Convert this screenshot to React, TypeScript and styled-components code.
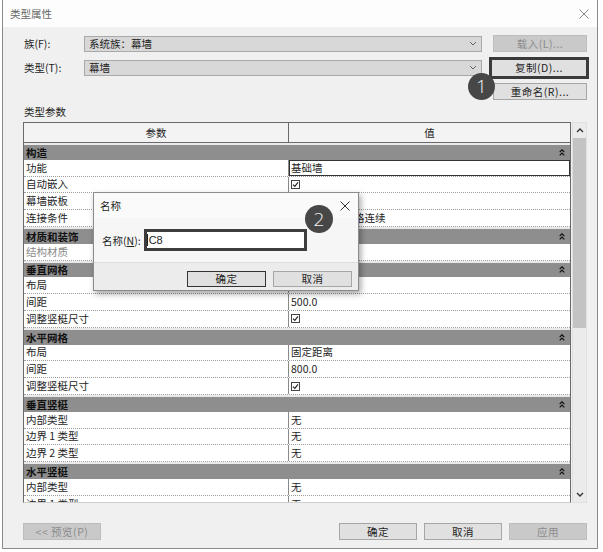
import React from 'react';
import styled, { createGlobalStyle } from 'styled-components';

const FONT = `"Noto Sans CJK SC", "Noto Sans", sans-serif`;
const BODY = '#f0f0f0';
const INK = '#1e1e1e';
const SECTION = '#8e8e8e';
const ROW_H = '16.8px';

const GlobalStyle = createGlobalStyle`
  html, body { margin: 0; padding: 0; background: #fff; }
  body { font-family: ${FONT}; font-size: 10.5px; color: ${INK}; }
`;

const Window = styled.div`
  position: relative;
  box-sizing: border-box;
  margin-left: 2px;
  width: 596px;
  height: 549px;
  border: 1px solid #8a8a8a;
  border-top: none;
  display: flex;
  flex-direction: column;
  background: ${BODY};
`;

const TitleBar = styled.div`
  height: 27px;
  flex-shrink: 0;
  background: #fdfdfd;
  display: flex;
  align-items: center;
  justify-content: space-between;
  padding: 0 8px 0 7px;
  color: #666;
  line-height: 14px;
`;

const Body = styled.div`
  flex: 1;
  display: flex;
  flex-direction: column;
  padding: 8px 10px 0 20px;
`;

const TopGrid = styled.div`
  display: grid;
  grid-template-columns: 61px 398px 1fr;
  grid-auto-rows: 17px;
  row-gap: 7px;
  align-items: center;
`;

const FieldLabel = styled.div`
  padding-left: 1px;
  line-height: 14px;
`;

const Combo = styled.div`
  box-sizing: border-box;
  height: 16px;
  background: #d8d8d8;
  border: 1px solid #a9a9a9;
  display: flex;
  align-items: center;
  justify-content: space-between;
  padding: 0 4px 0 4px;
  line-height: 14px;
`;

const Button = styled.button<{ $disabled?: boolean; $marked?: boolean }>`
  box-sizing: border-box;
  width: ${p => (p.$marked ? '96px' : '94px')};
  height: ${p => (p.$marked ? '18px' : '17px')};
  justify-self: end;
  margin: 0;
  padding: 0;
  font-family: ${FONT};
  font-size: 10.5px;
  line-height: 14px;
  letter-spacing: 0.5px;
  background: ${p => (p.$disabled ? '#c9c9c9' : '#e0e0e0')};
  color: ${p => (p.$disabled ? '#8c8c8c' : INK)};
  border: 1px solid ${p => (p.$disabled ? '#bdbdbd' : '#a6a6a6')};
  outline: ${p => (p.$marked ? '3px solid #3a3a3a' : 'none')};
  outline-offset: -1px;
`;

const ParamsLabel = styled.div`
  height: 22px;
  box-sizing: border-box;
  padding: 5px 0 0 1px;
  line-height: 14px;
`;

const TableArea = styled.div`
  height: 381px;
  display: flex;
  gap: 1px;
`;

const Table = styled.div`
  box-sizing: border-box;
  width: 548px;
  height: 100%;
  border: 1px solid #6a6a6a;
  border-bottom-color: #cfcfcf;
  background: #fff;
  overflow: hidden;
`;

const HeaderRow = styled.div`
  display: grid;
  grid-template-columns: 265px 1fr;
  height: 19px;
  background: #f3f3f3;
  border-bottom: 1px solid #6a6a6a;
`;

const HeaderCell = styled.div<{ $first?: boolean }>`
  display: flex;
  align-items: center;
  justify-content: center;
  line-height: 14px;
  border-right: ${p => (p.$first ? '1px solid #6a6a6a' : 'none')};
`;

const SectionRow = styled.div`
  box-sizing: border-box;
  height: ${ROW_H};
  background: ${SECTION};
  border-top: 2px solid #eaeaea;
  display: flex;
  align-items: center;
  justify-content: space-between;
  padding: 0 5px 0 2px;
  font-weight: 700;
  color: #111;
  line-height: 13px;
`;

const Row = styled.div`
  box-sizing: border-box;
  height: ${ROW_H};
  display: grid;
  grid-template-columns: 265px 1fr;
  border-bottom: 1px dotted #9c9c9c;
`;

const ParamCell = styled.div<{ $muted?: boolean }>`
  display: flex;
  align-items: center;
  padding-left: 2px;
  border-right: 1px solid #8a8a8a;
  color: ${p => (p.$muted ? '#8a8a8a' : INK)};
  line-height: 14px;
  white-space: nowrap;
`;

const ValueCell = styled.div<{ $editing?: boolean }>`
  display: flex;
  align-items: center;
  padding-left: 2px;
  line-height: 14px;
  white-space: nowrap;
  box-shadow: ${p => (p.$editing ? 'inset 0 0 0 1px #333' : 'none')};
`;

const CheckBox = styled.span`
  box-sizing: border-box;
  width: 9px;
  height: 9px;
  border: 1px solid #444;
  display: inline-flex;
  align-items: center;
  justify-content: center;
  background: #fff;
`;

const ScrollBar = styled.div`
  width: 15px;
  display: flex;
  flex-direction: column;
  background: #ebebeb;
  border: 1px solid #e0e0e0;
  box-sizing: border-box;
`;

const ScrollArrow = styled.div`
  height: 15px;
  display: flex;
  align-items: center;
  justify-content: center;
  flex-shrink: 0;
`;

const ScrollThumb = styled.div`
  height: 190px;
  background: #c3c3c3;
  flex-shrink: 0;
`;

const ScrollTrack = styled.div`
  flex: 1;
`;

const Footer = styled.div`
  margin-top: 20px;
  display: flex;
  align-items: center;
  gap: 7px;
`;

const FooterButton = styled(Button)`
  width: 78px;
  &:first-child { margin-right: auto; }
`;

const Badge = styled.div<{ $x: number; $y: number; $d: number }>`
  position: absolute;
  left: ${p => p.$x}px;
  top: ${p => p.$y}px;
  width: ${p => p.$d}px;
  height: ${p => p.$d}px;
  border-radius: 50%;
  background: #474747;
  color: #f4f4f4;
  display: flex;
  align-items: center;
  justify-content: center;
  font-family: "Open Sans", "Noto Sans", sans-serif;
  font-size: 19px;
  font-weight: 300;
  line-height: 1;
  z-index: 5;
`;

const NameDialog = styled.div`
  position: absolute;
  left: 90px;
  top: 192px;
  width: 266px;
  height: 99px;
  box-sizing: border-box;
  border: 1px solid #8c8c8c;
  background: #f6f6f6;
  box-shadow: 2px 3px 6px rgba(0, 0, 0, 0.35);
  display: flex;
  flex-direction: column;
  z-index: 4;
`;

const DialogTitle = styled.div`
  height: 25px;
  display: flex;
  align-items: center;
  justify-content: space-between;
  padding: 0 8px 0 6px;
  line-height: 14px;
  background: #fafafa;
`;

const DialogBody = styled.div`
  flex: 1;
  display: flex;
  align-items: center;
  padding-left: 8px;
  gap: 3px;
`;

const NameInput = styled.div`
  box-sizing: border-box;
  width: 163px;
  height: 22px;
  border: 3px solid #3d3d3d;
  background: #fff;
  display: flex;
  align-items: center;
  padding-left: 0;
  line-height: 14px;
  font-family: "Liberation Sans", sans-serif;
  font-size: 11px;
`;

const Caret = styled.span`
  width: 1px;
  height: 12px;
  background: #222;
  margin-right: 1px;
`;

const DialogFooter = styled.div`
  height: 28px;
  box-sizing: border-box;
  border-top: 1px solid #dcdcdc;
  background: #ececec;
  display: flex;
  justify-content: flex-end;
  align-items: flex-start;
  padding: 8px 6px 0 0;
  gap: 7px;
`;

const DialogButton = styled(Button)<{ $default?: boolean }>`
  width: 79px;
  height: 16px;
  border-color: ${p => (p.$default ? '#333' : '#a6a6a6')};
`;

const Chevron = ({ up }: { up?: boolean }) => (
  <svg width="8" height="5" viewBox="0 0 8 5">
    <path d={up ? 'M1 4 L4 1 L7 4' : 'M1 1 L4 4 L7 1'} fill="none" stroke="#333" strokeWidth="1.4" />
  </svg>
);

const ComboArrow = () => (
  <svg width="8" height="5" viewBox="0 0 8 5">
    <path d="M1 1 L4 4 L7 1" fill="none" stroke="#666" strokeWidth="1" />
  </svg>
);

const Collapse = () => (
  <svg width="6" height="7" viewBox="0 0 6 7">
    <path d="M0.7 3.2 L3 0.8 L5.3 3.2 M0.7 6.4 L3 4 L5.3 6.4" fill="none" stroke="#111" strokeWidth="1.2" />
  </svg>
);

const CloseX = ({ color, size }: { color: string; size: number }) => (
  <svg width={size} height={size} viewBox="0 0 10 10">
    <path d="M0.5 0.5 L9.5 9.5 M9.5 0.5 L0.5 9.5" stroke={color} strokeWidth="1" />
  </svg>
);

const Check = () => (
  <CheckBox>
    <svg width="7" height="7" viewBox="0 0 7 7">
      <path d="M1 3.6 L2.8 5.4 L6 1.4" fill="none" stroke="#222" strokeWidth="1.1" />
    </svg>
  </CheckBox>
);

interface Param {
  p: string;
  v?: string;
  check?: boolean;
  editing?: boolean;
  muted?: boolean;
}

const SECTIONS: { title: string; rows: Param[] }[] = [
  {
    title: '构造',
    rows: [
      { p: '功能', v: '基础墙', editing: true },
      { p: '自动嵌入', check: true },
      { p: '幕墙嵌板', v: '无' },
      { p: '连接条件', v: '边界和垂直网格连续' },
    ],
  },
  { title: '材质和装饰', rows: [{ p: '结构材质', v: '', muted: true }] },
  {
    title: '垂直网格',
    rows: [
      { p: '布局', v: '固定距离' },
      { p: '间距', v: '500.0' },
      { p: '调整竖梃尺寸', check: true },
    ],
  },
  {
    title: '水平网格',
    rows: [
      { p: '布局', v: '固定距离' },
      { p: '间距', v: '800.0' },
      { p: '调整竖梃尺寸', check: true },
    ],
  },
  {
    title: '垂直竖梃',
    rows: [
      { p: '内部类型', v: '无' },
      { p: '边界 1 类型', v: '无' },
      { p: '边界 2 类型', v: '无' },
    ],
  },
  {
    title: '水平竖梃',
    rows: [
      { p: '内部类型', v: '无' },
      { p: '边界 1 类型', v: '无' },
      { p: '边界 2 类型', v: '无' },
    ],
  },
];

export default function App() {
  return (
    <>
      <GlobalStyle />
      <Window>
        <TitleBar>
          <span>类型属性</span>
          <CloseX color="#888" size={10} />
        </TitleBar>
        <Body>
          <TopGrid>
            <FieldLabel>族(F):</FieldLabel>
            <Combo>
              <span>系统族：幕墙</span>
              <ComboArrow />
            </Combo>
            <Button $disabled>载入(L)...</Button>
            <FieldLabel>类型(T):</FieldLabel>
            <Combo>
              <span>幕墙</span>
              <ComboArrow />
            </Combo>
            <Button $marked>复制(D)...</Button>
            <span />
            <span />
            <Button>重命名(R)...</Button>
          </TopGrid>

          <ParamsLabel>类型参数</ParamsLabel>

          <TableArea>
            <Table>
              <HeaderRow>
                <HeaderCell $first>参数</HeaderCell>
                <HeaderCell>值</HeaderCell>
              </HeaderRow>
              {SECTIONS.map(sec => (
                <React.Fragment key={sec.title}>
                  <SectionRow>
                    <span>{sec.title}</span>
                    <Collapse />
                  </SectionRow>
                  {sec.rows.map((r, i) => (
                    <Row key={sec.title + i}>
                      <ParamCell $muted={r.muted}>{r.p}</ParamCell>
                      <ValueCell $editing={r.editing}>
                        {r.check ? <Check /> : r.v}
                      </ValueCell>
                    </Row>
                  ))}
                </React.Fragment>
              ))}
            </Table>
            <ScrollBar>
              <ScrollArrow><Chevron up /></ScrollArrow>
              <ScrollThumb />
              <ScrollTrack />
              <ScrollArrow><Chevron /></ScrollArrow>
            </ScrollBar>
          </TableArea>

          <Footer>
            <FooterButton $disabled>&lt;&lt; 预览(P)</FooterButton>
            <FooterButton>确定</FooterButton>
            <FooterButton>取消</FooterButton>
            <FooterButton $disabled>应用</FooterButton>
          </Footer>
        </Body>

        <NameDialog>
          <DialogTitle>
            <span>名称</span>
            <CloseX color="#333" size={10} />
          </DialogTitle>
          <DialogBody>
            <span>名称(<u>N</u>):</span>
            <NameInput>
              <Caret />
              C8
            </NameInput>
          </DialogBody>
          <DialogFooter>
            <DialogButton $default>确定</DialogButton>
            <DialogButton>取消</DialogButton>
          </DialogFooter>
        </NameDialog>

        <Badge $x={465} $y={73} $d={27}>1</Badge>
        <Badge $x={302} $y={205} $d={28}>2</Badge>
      </Window>
    </>
  );
}
